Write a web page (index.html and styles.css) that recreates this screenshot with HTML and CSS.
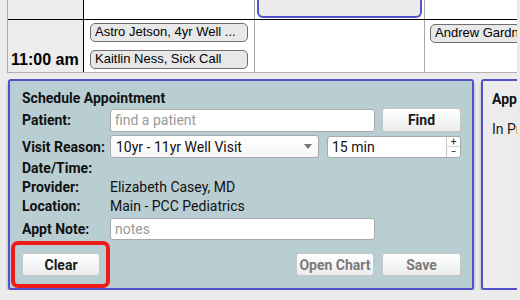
FILE: index.html
```html
<!DOCTYPE html>
<html>
<head>
<meta charset="utf-8">
<link rel="stylesheet" href="styles.css">
</head>
<body>
<div class="app">
  <div class="calendar">
    <div class="cal-row row-top">
      <div class="cell time"></div>
      <div class="cell col"></div>
      <div class="cell col"><div class="slot-selected"></div></div>
      <div class="cell col last"></div>
    </div>
    <div class="cal-row row-main">
      <div class="cell time"><span class="time-label">11:00 am</span></div>
      <div class="cell col stack">
        <div class="pill">Astro Jetson, 4yr Well ...</div>
        <div class="pill">Kaitlin Ness, Sick Call</div>
      </div>
      <div class="cell col"></div>
      <div class="cell col last stack">
        <div class="pill pill-wide">Andrew Gardner, Sick Call</div>
      </div>
    </div>
  </div>

  <div class="panels">
    <div class="panel schedule">
      <div class="title">Schedule Appointment</div>
      <div class="frow r-patient">
        <label class="lbl">Patient:</label>
        <div class="input w-patient placeholder">find a patient</div>
        <button class="btn btn-find">Find</button>
      </div>
      <div class="frow r-visit">
        <label class="lbl">Visit Reason:</label>
        <div class="input select w-select">
          <span>10yr - 11yr Well Visit</span>
          <span class="caret"></span>
        </div>
        <div class="input spin w-dur">
          <span class="spin-val">15 min</span>
          <span class="spin-btns"><span class="sb">+</span><span class="sb">−</span></span>
        </div>
      </div>
      <div class="frow r-text r-date"><label class="lbl">Date/Time:</label></div>
      <div class="frow r-text r-info"><label class="lbl">Provider:</label><span class="val">Elizabeth Casey, MD</span></div>
      <div class="frow r-text r-info"><label class="lbl">Location:</label><span class="val">Main - PCC Pediatrics</span></div>
      <div class="frow r-note">
        <label class="lbl">Appt Note:</label>
        <div class="input w-patient placeholder">notes</div>
      </div>
      <div class="frow r-actions">
        <div class="highlight-wrap">
          <button class="btn btn-clear">Clear</button>
          <div class="highlight"></div>
        </div>
        <div class="spacer"></div>
        <button class="btn btn-disabled">Open Chart</button>
        <button class="btn btn-disabled btn-save">Save</button>
      </div>
    </div>
    <div class="panel appt">
      <div class="appt-title">Appointment Details</div>
      <div class="appt-status">In Progress</div>
    </div>
  </div>
</div>
</body>
</html>
```

FILE: styles.css
```css
* { box-sizing: border-box; }

html, body {
  margin: 0;
  padding: 0;
  background: #ebebeb;
  width: 520px;
  height: 300px;
  overflow: hidden;
}

.app {
  width: 517px;
  overflow: hidden;
}

/* ---------- calendar ---------- */
.calendar {
  margin-left: 7px;
  border-left: 1px solid #a9a9a9;
  font-family: "Liberation Sans", Arial, sans-serif;
}

.cal-row {
  display: grid;
  grid-template-columns: 76px 171px 170px 1fr;
}

.row-top {
  height: 20px;
  border-bottom: 1px solid #000;
}

.row-main {
  height: 53px;
  border-bottom: 1px solid #b0b0b0;
}

.cell {
  background: #fff;
  overflow: hidden;
  min-width: 0;
}

.cell.time {
  background: #ececec;
  border-right: 1px solid #000;
}

.cell.col {
  border-right: 1px solid #a8a8a8;
}

.cell.col.last {
  border-right: none;
}

.slot-selected {
  margin: 0 2px;
  height: 18px;
  background: #ebebeb;
  border: 2px solid #5353c8;
  border-top: none;
  border-radius: 0 0 6px 6px;
}

.row-main .time {
  display: flex;
  align-items: flex-end;
  padding: 0 0 3px 3px;
}

.time-label {
  font-size: 16px;
  font-weight: bold;
  line-height: 18px;
  color: #000;
}

.stack {
  display: flex;
  flex-direction: column;
  gap: 8px;
  padding: 3px 0 0 6px;
}

.last.stack {
  padding: 4px 0 0 5px;
}

.pill {
  width: 158px;
  height: 19px;
  border: 1.5px solid #6e6e6e;
  border-radius: 5px;
  background: #e8e8e8;
  font-size: 13px;
  line-height: 16px;
  padding-left: 4px;
  color: #000;
  white-space: nowrap;
  overflow: hidden;
}

.pill-wide {
  width: 170px;
}

/* ---------- panels ---------- */
.panels {
  display: flex;
  gap: 7px;
  margin: 6px 0 0 8px;
  font-family: Roboto, "Liberation Sans", Arial, sans-serif;
  font-size: 14px;
  color: #111;
}

.panel {
  border: 2px solid #5151c9;
  border-radius: 3px;
  box-shadow: 0 3px 3px rgba(0, 0, 0, 0.35);
  flex: none;
}

.schedule {
  width: 466px;
  background: #b9ced3;
  padding: 8px 11px 12px 12px;
}

.appt {
  width: 200px;
  background: #ececec;
  padding: 8px 9px;
}

.appt-title {
  font-weight: bold;
  line-height: 18px;
  white-space: nowrap;
  margin-top: 1px;
}

.appt-status {
  margin-top: 13px;
  white-space: nowrap;
  color: #222;
}

.title {
  font-weight: bold;
  line-height: 18px;
  height: 18px;
  margin-bottom: 1px;
}

.frow {
  display: flex;
  align-items: center;
}

.lbl {
  width: 88px;
  flex: none;
  font-weight: bold;
  white-space: nowrap;
}

.r-patient { height: 24px; }
.r-visit { height: 23px; margin-top: 3px; }
.r-date { height: 20px; line-height: 20px; }
.r-info { height: 19px; line-height: 19px; }
.r-note { height: 22px; margin-top: 2px; }
.r-actions { height: 23px; margin-top: 13px; }

.val {
  color: #111;
  white-space: nowrap;
}

.input {
  height: 22px;
  background: #fff;
  border: 1px solid #a9a9a9;
  border-radius: 3px;
  padding: 0 4px;
  line-height: 20px;
  color: #111;
  white-space: nowrap;
}

.r-patient .input { height: 23px; line-height: 21px; }

.placeholder { color: #9a9a9a; }

.w-patient { width: 265px; }

.w-select {
  width: 209px;
  height: 23px;
  display: flex;
  align-items: center;
  justify-content: space-between;
  padding: 0 6px 0 5px;
  background: linear-gradient(#fff, #f6f6f6);
}

.caret {
  width: 0;
  height: 0;
  border-left: 4.5px solid transparent;
  border-right: 4.5px solid transparent;
  border-top: 5px solid #777;
}

.w-dur {
  width: 134px;
  height: 22px;
  margin-left: 8px;
  display: flex;
  padding: 0 0 0 4px;
}

.spin-val { flex: 1; }

.spin-btns {
  width: 14px;
  border-left: 1px solid #c8c8c8;
  display: flex;
  flex-direction: column;
  font-size: 10px;
  line-height: 9px;
  text-align: center;
  color: #222;
}

.sb {
  flex: 1;
  display: flex;
  align-items: center;
  justify-content: center;
  overflow: hidden;
}

.sb + .sb {
  border-top: 1px solid #d4d4d4;
}

.btn {
  font-family: Roboto, "Liberation Sans", Arial, sans-serif;
  font-size: 14px;
  font-weight: bold;
  height: 23px;
  width: 78px;
  padding: 0;
  border: 1px solid #c6c6c6;
  border-radius: 3px;
  background: linear-gradient(#ffffff, #ececec);
  color: #1a1a1a;
}

.btn-find {
  width: 79px;
  height: 24px;
  margin-left: 7px;
}

.btn-disabled {
  color: #7a7a7a;
}

.btn-save {
  width: 79px;
  margin-left: 8px;
}

.spacer { flex: 1; }

.highlight-wrap {
  position: relative;
}

.btn-clear {
  display: block;
}

.highlight {
  position: absolute;
  left: -11px;
  top: -12px;
  width: 99px;
  height: 47px;
  border: 4px solid #ee1b1b;
  border-radius: 7px;
}
```
